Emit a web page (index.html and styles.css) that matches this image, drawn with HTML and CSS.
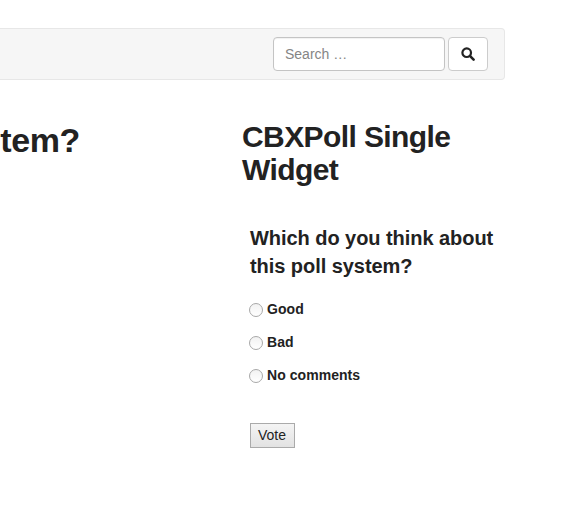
FILE: index.html
```html
<!DOCTYPE html>
<html lang="en">
<head>
<meta charset="utf-8">
<title>CBXPoll</title>
<link rel="stylesheet" href="styles.css">
</head>
<body>
<nav class="navbar">
  <form class="search">
    <input class="search-input" type="text" placeholder="Search …">
    <button class="search-btn" type="button" aria-label="Search">
      <svg width="14" height="14" viewBox="0 0 14 14"><circle cx="5.7" cy="5.7" r="4.3" fill="none" stroke="#222" stroke-width="2.2"/><path d="M8.9 8.9 L12.6 12.6" stroke="#222" stroke-width="2.6" stroke-linecap="round"/></svg>
    </button>
  </form>
</nav>
<main class="content">
  <div class="left">
    <h1 class="page-title">Which do you think about this poll system?</h1>
  </div>
  <aside class="widget">
    <h2 class="widget-title">CBXPoll Single Widget</h2>
    <form class="poll">
      <h3 class="poll-question">Which do you think about this poll system?</h3>
      <label class="option"><input type="radio" name="poll"><span>Good</span></label>
      <label class="option"><input type="radio" name="poll"><span>Bad</span></label>
      <label class="option"><input type="radio" name="poll"><span>No comments</span></label>
      <button class="vote" type="button">Vote</button>
    </form>
  </aside>
</main>
</body>
</html>
```
FILE: styles.css
```css
* { box-sizing: border-box; }
html, body { margin: 0; padding: 0; height: 100%; overflow: hidden; background: #fff; }
body { font-family: "Liberation Sans", Arial, sans-serif; color: #222; }

.navbar {
  width: 505px;
  height: 52px;
  margin-top: 28px;
  background: #f6f6f6;
  border: 1px solid #e7e7e7;
  border-left: 0;
  border-radius: 0 4px 4px 0;
  display: flex;
  justify-content: flex-end;
  align-items: center;
  padding-right: 16px;
}
.search { display: flex; gap: 3px; }
.search-input {
  width: 172px;
  height: 34px;
  padding: 0 11px;
  border: 1px solid #c4c4c4;
  border-radius: 4px;
  font: 14px "Liberation Sans", Arial, sans-serif;
  color: #555;
  background: #fff;
  outline: 0;
  box-shadow: inset 0 1px 1px rgba(0,0,0,.06);
}
.search-input::placeholder { color: #858585; opacity: 1; }
.search-btn {
  width: 40px;
  height: 34px;
  padding: 0;
  border: 1px solid #ccc;
  border-radius: 4px;
  background: #fff;
  display: flex;
  align-items: center;
  justify-content: center;
}

.content { display: flex; }
.left {
  width: 242px;
  flex: none;
  overflow: hidden;
  display: flex;
  justify-content: flex-end;
  padding-right: 162px;
}
.page-title {
  margin: 40px 0 0;
  flex: none;
  white-space: nowrap;
  font-size: 34px;
  line-height: 40px;
  font-weight: 700;
  color: #222;
  letter-spacing: -0.4px;
}
.widget { width: 262px; flex: none; }
.widget-title {
  margin: 40px 0 0;
  font-size: 30px;
  line-height: 33px;
  font-weight: 700;
  color: #222;
  letter-spacing: -0.6px;
}
.poll { padding: 38px 0 0 8px; }
.poll-question {
  margin: 0 0 13px;
  font-size: 20px;
  line-height: 28px;
  font-weight: 700;
  color: #222;
  letter-spacing: -0.05px;
}
.option {
  display: flex;
  align-items: center;
  height: 33px;
  font-size: 14px;
  font-weight: 700;
  letter-spacing: 0.05px;
}
.option input {
  appearance: none;
  width: 14px;
  height: 14px;
  margin: 0 4px 0 -1px;
  flex: none;
  border: 1px solid #a8a8a8;
  border-radius: 50%;
  background: linear-gradient(#f2f2f2, #fff);
}
.option span { position: relative; top: -1px; }
.vote {
  display: block;
  margin-top: 31px;
  width: 45px;
  height: 25px;
  padding: 0 1px 1px 0;
  font: 14px "Liberation Sans", Arial, sans-serif;
  color: #222;
  border: 1px solid #aaa;
  border-radius: 0;
  background: linear-gradient(#f4f4f4, #e2e2e2);
}
```
